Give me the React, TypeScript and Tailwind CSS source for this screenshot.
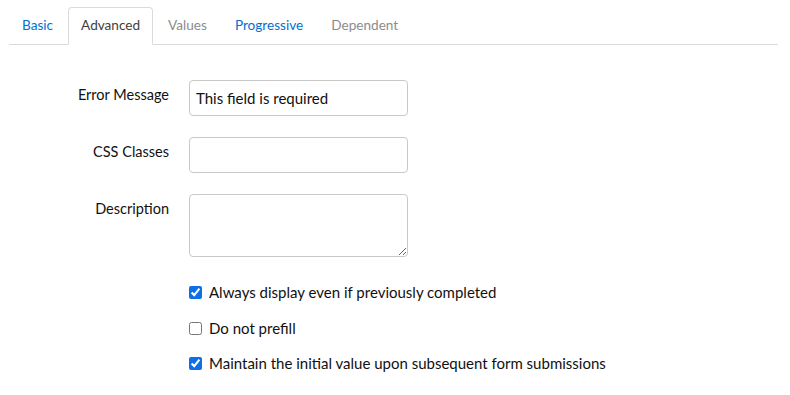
const tabs = [
  { label: "Basic", tone: "link" },
  { label: "Advanced", tone: "active" },
  { label: "Values", tone: "muted" },
  { label: "Progressive", tone: "link" },
  { label: "Dependent", tone: "muted" },
] as const;

const toneClass = {
  link: "text-[#0070d2] border-transparent",
  active: "text-[#3e3e3c] border-[#dddbda] border-b-white bg-white",
  muted: "text-[#8c8c8c] border-transparent",
};

const options = [
  { label: "Always display even if previously completed", checked: true },
  { label: "Do not prefill", checked: false },
  { label: "Maintain the initial value upon subsequent form submissions", checked: true },
];

function Field({ label, children }: { label: string; children: React.ReactNode }) {
  return (
    <div className="flex items-start gap-5">
      <label className="w-[160px] pt-[5px] text-right text-[14.5px] leading-5 text-[#111111]">
        {label}
      </label>
      {children}
    </div>
  );
}

export default function App() {
  return (
    <div className="h-[395px] w-[790px] bg-white font-['Lato',sans-serif]">
      <div className="pl-[9px] pr-[12px] pt-[7px]">
        <nav className="flex gap-[2px] border-b border-[#dddbda]">
          {tabs.map(({ label, tone }) => (
            <div
              key={label}
              className={`-mb-px flex h-[38px] items-center rounded-t-[4px] border px-[12px] pb-[1px] text-[13.6px] ${toneClass[tone]}`}
            >
              {label}
            </div>
          ))}
        </nav>
      </div>

      <form className="mt-[35px] flex flex-col gap-[21px] pl-[9px]">
        <Field label="Error Message">
          <input
            defaultValue="This field is required"
            className="h-[36px] w-[219px] rounded-[4px] border border-[#c9c9c9] px-[6px] text-[15px] text-[#111111] outline-none"
          />
        </Field>
        <Field label="CSS Classes">
          <input className="h-[36px] w-[219px] rounded-[4px] border border-[#c9c9c9] px-[6px] text-[15px] outline-none" />
        </Field>
        <Field label="Description">
          <textarea className="h-[63px] w-[219px] rounded-[4px] border border-[#c9c9c9] px-[6px] text-[15px] outline-none" />
        </Field>
      </form>

      <div className="mt-[25px] flex flex-col gap-[14.5px] pl-[189px]">
        {options.map(({ label, checked }) => (
          <label key={label} className="flex h-[21px] items-center gap-[7px] text-[15px] text-[#111111]">
            <input
              type="checkbox"
              defaultChecked={checked}
              className="m-0 h-[13px] w-[13px] accent-[#0b6fe8]"
            />
            {label}
          </label>
        ))}
      </div>
    </div>
  );
}
